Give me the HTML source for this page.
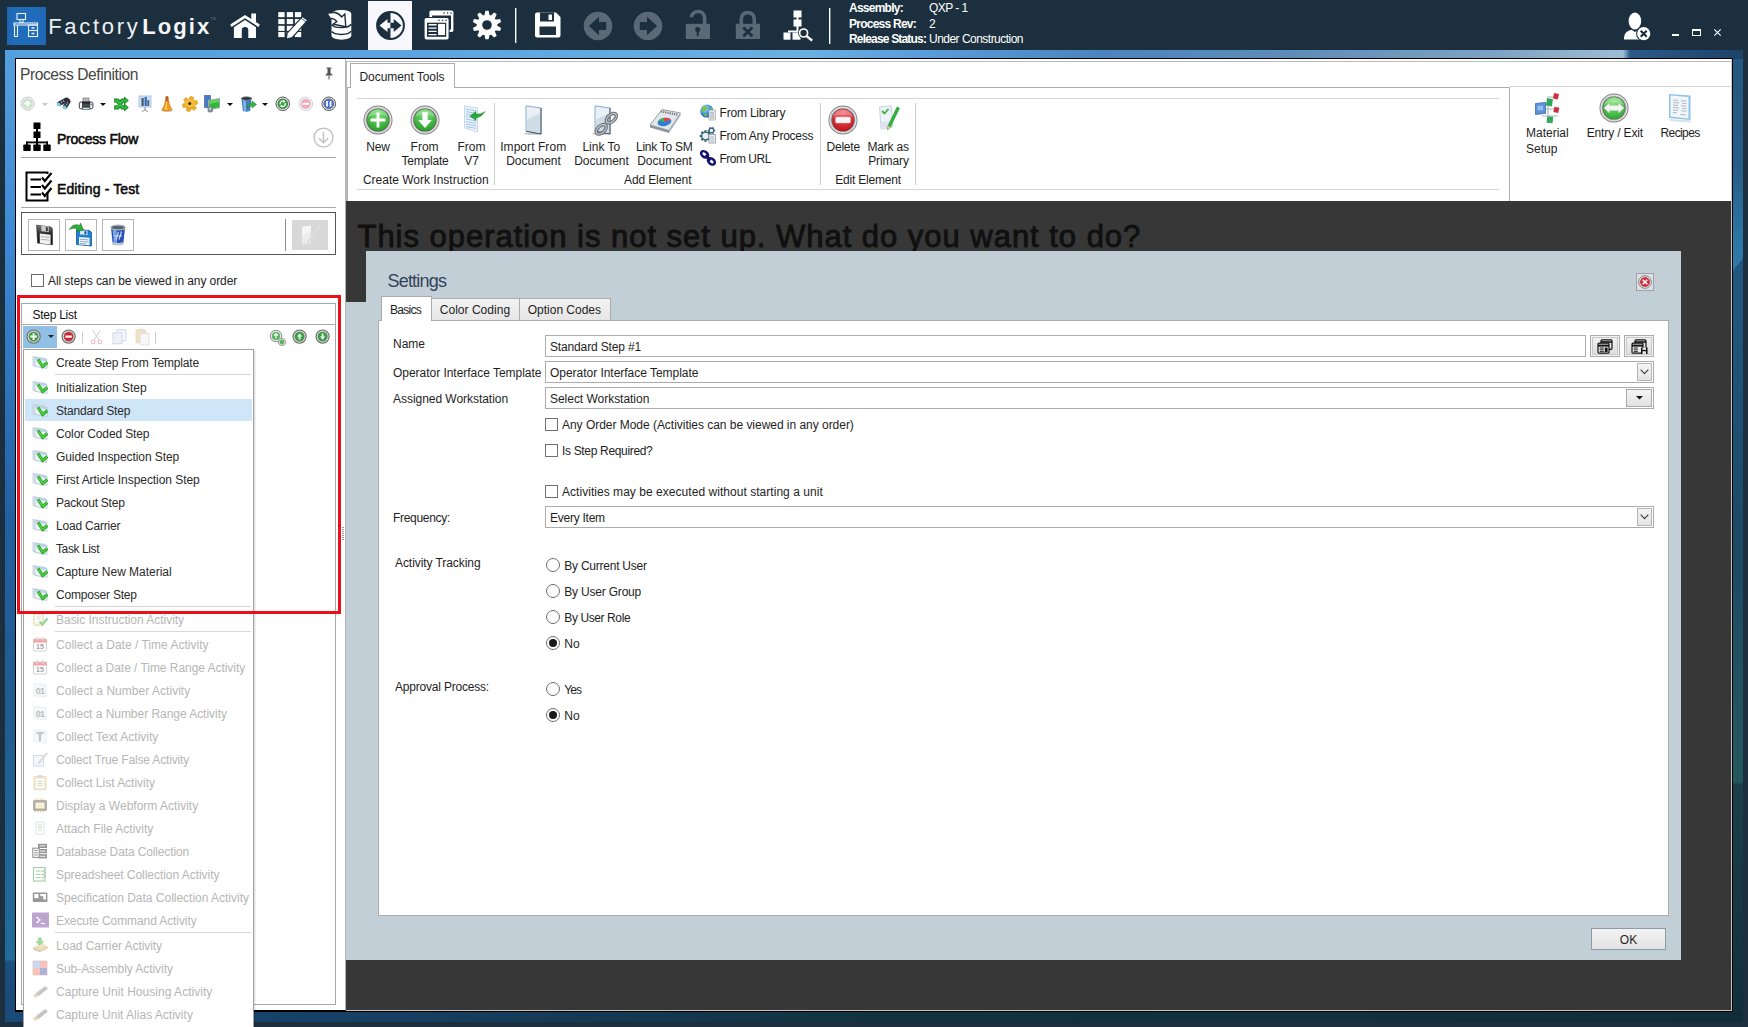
<!DOCTYPE html>
<html><head><meta charset="utf-8"><title>FactoryLogix</title>
<style>
*{box-sizing:border-box;margin:0;padding:0}
html,body{width:1748px;height:1027px;overflow:hidden}
body{position:relative;background:#1b2f3e;font-family:"Liberation Sans",sans-serif;font-size:12px;color:#222;line-height:1}
.a{position:absolute}
.t{position:absolute;white-space:nowrap;line-height:14px;height:14px}
svg{position:absolute;overflow:visible}
/* frame */
#frame{left:5px;top:50px;width:1738px;height:972px;background:#12303f}
#fl{left:5px;top:50px;width:11px;height:972px;background:linear-gradient(180deg,#54a0de 0%,#3d88d4 20%,#2360a2 48%,#205c8e 67%,#216a99 92%,#226c9b 93.5%,#1a4e7e 93.9%,#194a78 100%)}
#ft{left:5px;top:50px;width:1738px;height:9px;background:linear-gradient(90deg,#54a0de 0%,#5ba4df 23%,#6bb0e2 46%,#5c9fdc 52%,#4c84be 63%,#5f8db8 74.5%,#7fa3c2 86%,#9dbdd6 93.1%,#2c5a88 93.5%,#1d4268 100%)}
#fr{left:1732px;top:59px;width:11px;height:963px;background:linear-gradient(180deg,#205680 0%,#205680 25%,#1b4a66 50%,#24585e 75%,#1b3f48 75.4%,#122f3b 100%)}
#fr2{left:1732px;top:59px;width:11px;height:214px;background:linear-gradient(180deg,#245882 0%,#265c88 50%,#2c76a4 84%,#2e7aa8 100%);clip-path:polygon(0 0,100% 0,100% 199.5px,0 212.6px)}
#fb{left:5px;top:1011px;width:1738px;height:11px;background:linear-gradient(90deg,#194a78 0%,#163f62 22%,#12323f 50%,#112d3a 100%)}
#hdr{left:0;top:0;width:1748px;height:50px;background:#1b2f3e}
#lstrip{left:0;top:50px;width:5px;height:977px;background:#1b2f3e}
</style></head><body>
<div class="a" id="frame"></div>
<div class="a" id="ft"></div>
<div class="a" id="fl"></div>
<div class="a" id="fr"></div>
<div class="a" id="fr2"></div>
<div class="a" id="fb"></div>
<div class="a" id="hdr"></div>
<div class="a" id="lstrip"></div>

<!-- ===== HEADER ===== -->
<div class="a" style="left:7px;top:7px;width:39px;height:38px;background:linear-gradient(90deg,#1f66b2,#206cba 20%,#206cba 80%,#1f66b2)"></div>
<svg style="left:7px;top:7px" width="39" height="38" viewBox="0 0 39 38" fill="none" stroke="#e8f0fa" stroke-width="1.1">
<rect x="10" y="6.5" width="8.5" height="6"/><path d="M13 12.5v3h3v-3"/><rect x="7" y="16" width="23.5" height="2"/><path d="M7.5 18v11.5h3V18"/><rect x="21.5" y="18" width="9" height="11.5"/><path d="M21.5 23.5h9"/><path d="M24.5 21h3M24.5 26.5h3" stroke-width="1.4"/></svg>
<div class="t" style="left:48.2px;top:11px;height:32px;line-height:32px;font-size:22px;color:#eef1f4;letter-spacing:2.7px">Factory</div>
<div class="t" style="left:142.3px;top:11px;height:32px;line-height:32px;font-size:22px;color:#f4f6f8;letter-spacing:2.05px;font-weight:700">Logix</div>
<div class="t" style="left:210px;top:16px;font-size:4px;color:#62727f;line-height:6px;height:6px">TM</div>
<!-- home -->
<svg style="left:229px;top:12px" width="32" height="28" viewBox="229 12 32 28" fill="#fff"><path d="M245 15 L230.2 24.6 L231.6 26.9 L245 18.3 L258.4 26.9 L259.8 24.6 L256 22.1 V13.6 H251.3 V19.1 Z"/><path d="M233.9 27.2 L245 20 L256 27.2 V38 H248.3 V30 Q248.3 27 245 27 Q241.8 27 241.8 30 V38 H233.9 Z"/></svg>
<!-- grid edit -->
<svg style="left:278px;top:11px" width="30" height="28" viewBox="278 11 30 28" fill="#fff"><rect x="278.3" y="12.1" width="6.3" height="5.1"/><rect x="286.8" y="12.1" width="6.3" height="5.1"/><rect x="294.9" y="12.1" width="6.3" height="5.1"/><rect x="278.3" y="19.0" width="6.3" height="5.1"/><rect x="286.8" y="19.0" width="6.3" height="5.1"/><rect x="294.9" y="19.0" width="6.3" height="5.1"/><rect x="278.3" y="25.8" width="6.3" height="5.1"/><rect x="286.8" y="25.8" width="6.3" height="5.1"/><rect x="294.9" y="25.8" width="6.3" height="5.1"/><rect x="278.3" y="32.0" width="6.3" height="5.1"/><rect x="286.8" y="32.0" width="6.3" height="5.1"/><rect x="294.9" y="32.0" width="6.3" height="5.1"/><path d="M302.6 16.4 L307.8 20.2 L292.2 37.6 L286.2 39 L287.2 33.2 Z" stroke="#1b2f3e" stroke-width="1.2"/><path d="M301 18.2 L306.2 22" stroke="#1b2f3e" stroke-width="0.8"/></svg>
<!-- db -->
<svg style="left:326px;top:9px" width="28" height="32" viewBox="326 9 28 32" fill="#fff"><path d="M331.5 14 C331.5 8.8 351.3 8.8 351.3 14 V35.5 C351.3 41 331.5 41 331.5 35.5 Z"/><path d="M331.5 24.8 C335 28.6 348 28.6 351.3 24.3 M331.5 31.6 C335 35.4 348 35.4 351.3 31.1" stroke="#1b2f3e" stroke-width="1.5" fill="none"/><path d="M327 13.3 L334.5 12.2 C338 13 340 14.5 341.8 17 L344.8 14 L345.8 26.8 L333.2 24.2 L336.8 21.6 C335.5 19.6 333.5 18.2 330.2 18.4 Z" stroke="#1b2f3e" stroke-width="1.4"/></svg>
<!-- active tab -->
<div class="a" style="left:368px;top:1px;width:44px;height:49px;background:#f8f8fc"></div>
<svg style="left:374.5px;top:9.8px" width="31" height="31" viewBox="-15.5 -15.5 31 31"><path d="M0 -13.4 A13.4 13.4 0 0 0 -13.4 0 A13.4 13.4 0 0 0 0 13.4 Z" fill="#1b2f3e"/><circle r="13.4" fill="none" stroke="#1b2f3e" stroke-width="2"/><path d="M-11 0 L-3 -6.4 V-2.8 H0 V2.8 H-3 V6.4 Z" fill="#f8f8fc"/><path d="M11 0 L3.2 -6.4 V-2.8 H0 V2.8 H3.2 V6.4 Z" fill="#1b2f3e"/></svg>
<!-- windows -->
<svg style="left:423px;top:9px" width="32" height="32" viewBox="423 9 32 32"><rect x="429.4" y="10.4" width="24" height="21.6" rx="1.8" fill="#fff"/><rect x="432.1" y="15.5" width="18.9" height="14.1" fill="#1b2f3e"/><circle cx="444.1" cy="13" r="0.8" fill="#1b2f3e"/><circle cx="447.6" cy="13" r="0.8" fill="#1b2f3e"/><circle cx="451" cy="13" r="0.8" fill="#1b2f3e"/><rect x="423.6" y="16.9" width="26" height="23.6" rx="2.4" fill="#1b2f3e"/><rect x="424.6" y="17.9" width="24" height="21.6" rx="1.8" fill="#fff"/><rect x="427" y="22.7" width="19.2" height="14.1" fill="#1b2f3e"/><circle cx="439" cy="20.3" r="0.8" fill="#1b2f3e"/><circle cx="442.6" cy="20.3" r="0.8" fill="#1b2f3e"/><circle cx="446" cy="20.3" r="0.8" fill="#1b2f3e"/><path d="M428.5 24.8h8.1M428.5 28.1h8.1M428.5 31.4h8.1M428.5 34.6h8.1" stroke="#fff" stroke-width="1.4"/><rect x="438.1" y="23.9" width="6.9" height="11.2" fill="#fff"/></svg>
<!-- gear -->
<svg style="left:472px;top:10px" width="30" height="30" viewBox="-15 -15 30 30" fill="#fff"><path d="M-2.7 -9 L-1.6 -14.3 H1.6 L2.7 -9 Z" transform="rotate(0)"/><path d="M-2.7 -9 L-1.6 -14.3 H1.6 L2.7 -9 Z" transform="rotate(36)"/><path d="M-2.7 -9 L-1.6 -14.3 H1.6 L2.7 -9 Z" transform="rotate(72)"/><path d="M-2.7 -9 L-1.6 -14.3 H1.6 L2.7 -9 Z" transform="rotate(108)"/><path d="M-2.7 -9 L-1.6 -14.3 H1.6 L2.7 -9 Z" transform="rotate(144)"/><path d="M-2.7 -9 L-1.6 -14.3 H1.6 L2.7 -9 Z" transform="rotate(180)"/><path d="M-2.7 -9 L-1.6 -14.3 H1.6 L2.7 -9 Z" transform="rotate(216)"/><path d="M-2.7 -9 L-1.6 -14.3 H1.6 L2.7 -9 Z" transform="rotate(252)"/><path d="M-2.7 -9 L-1.6 -14.3 H1.6 L2.7 -9 Z" transform="rotate(288)"/><path d="M-2.7 -9 L-1.6 -14.3 H1.6 L2.7 -9 Z" transform="rotate(324)"/><circle r="10.3"/><circle r="4.8" fill="#1b2f3e"/></svg>
<div class="a" style="left:515px;top:8px;width:1px;height:35px;background:#fff"></div><div class="a" style="left:516px;top:8px;width:1px;height:35px;background:#6f7d88"></div>
<!-- save -->
<svg style="left:535px;top:12px" width="26" height="26" viewBox="0 0 26 26" fill="#fff"><path d="M2 0.5 H21 L25.5 5 V23.5 Q25.5 25.5 23.5 25.5 H2 Q0 25.5 0 23.5 V2.5 Q0 0.5 2 0.5 Z"/><rect x="5" y="0.5" width="14" height="9" fill="#1b2f3e"/><rect x="13.5" y="2.5" width="3.5" height="5.5" fill="#fff"/><rect x="4.5" y="14.5" width="16.5" height="8.5" fill="#1b2f3e"/></svg>
<!-- back / fwd -->
<svg style="left:583px;top:11px" width="30" height="30" viewBox="0 0 30 30"><circle cx="15" cy="15" r="14.3" fill="#596a76"/><path d="M5.9 15 L16 5.8 V10.9 H23.2 V19.1 H16 V24.2 Z" fill="#1b2f3e"/></svg>
<svg style="left:633px;top:11px" width="30" height="30" viewBox="0 0 30 30"><circle cx="15" cy="15" r="14.3" fill="#596a76"/><path d="M24.1 15 L14 5.8 V10.9 H6.8 V19.1 H14 V24.2 Z" fill="#1b2f3e"/></svg>
<!-- unlock -->
<svg style="left:685px;top:10px" width="26" height="30" viewBox="0 0 26 30"><path d="M6.3 7.2 C7.5 -0.5 19.6 -0.5 19.6 8 V15" fill="none" stroke="#596a76" stroke-width="3.6"/><rect x="0.8" y="13.8" width="24.2" height="15.2" fill="#596a76"/><circle cx="12.7" cy="19.6" r="2.5" fill="#1b2f3e"/><rect x="11.7" y="20" width="2" height="6" fill="#1b2f3e"/></svg>
<!-- lock x -->
<svg style="left:735px;top:10px" width="26" height="30" viewBox="0 0 26 30"><path d="M6.3 15 V9 C6.3 0.5 19.3 0.5 19.3 9 V15" fill="none" stroke="#596a76" stroke-width="3.6"/><rect x="0.8" y="13.8" width="24.2" height="15.2" fill="#596a76"/><path d="M8.3 17.6 L17.3 26.2 M17.3 17.6 L8.3 26.2" stroke="#1b2f3e" stroke-width="2.8"/></svg>
<!-- flow search -->
<svg style="left:783px;top:10px" width="31" height="31" viewBox="0 0 31 31" fill="#fff"><rect x="10.5" y="0.5" width="8" height="7"/><rect x="13.5" y="7" width="2" height="3"/><rect x="10.5" y="9.5" width="8" height="7"/><rect x="13.5" y="16" width="2" height="6"/><rect x="5" y="20.5" width="12" height="1.8"/><rect x="0.5" y="22.5" width="7" height="7.2"/><rect x="9.5" y="22.5" width="8" height="7.2"/><circle cx="20.6" cy="23" r="5.6" fill="#1b2f3e"/><circle cx="20.6" cy="23" r="4" fill="#1b2f3e" stroke="#fff" stroke-width="1.7"/><path d="M23.8 26.2 L29.2 30.6" stroke="#fff" stroke-width="2.4"/></svg>
<div class="a" style="left:829px;top:8px;width:1px;height:36px;background:#fff"></div><div class="a" style="left:830px;top:8px;width:1px;height:36px;background:#6f7d88"></div>
<div class="t" style="left:849px;top:1px;color:#fff;font-weight:700;letter-spacing:-0.75px">Assembly:</div>
<div class="t" style="left:929px;top:1px;color:#fff;letter-spacing:-0.55px">QXP - 1</div>
<div class="t" style="left:849px;top:17px;color:#fff;font-weight:700;letter-spacing:-0.75px">Process Rev:</div>
<div class="t" style="left:929px;top:17px;color:#fff;letter-spacing:-0.55px">2</div>
<div class="t" style="left:849px;top:32px;color:#fff;font-weight:700;letter-spacing:-0.82px">Release Status:</div>
<div class="t" style="left:929px;top:32px;color:#fff;letter-spacing:-0.52px">Under Construction</div>
<!-- user -->
<svg style="left:1622px;top:10px" width="32" height="32" viewBox="1622 10 32 32"><ellipse cx="1634.9" cy="21" rx="6.3" ry="8.6" fill="#fff"/><path d="M1624 39.6 C1624 33 1626.5 31.2 1631.5 29.8 L1634.9 32 L1638.3 29.8 C1641 30.6 1643 31.5 1644 33 V39.6 Z" fill="#fff"/><circle cx="1643.7" cy="33.7" r="7.6" fill="#1b2f3e"/><circle cx="1643.7" cy="33.7" r="6.6" fill="#fff"/><path d="M1640.7 30.7 L1646.7 36.7 M1646.7 30.7 L1640.7 36.7" stroke="#1b2f3e" stroke-width="2.1"/></svg>
<div class="a" style="left:1672px;top:34px;width:7px;height:2px;background:#fff"></div>
<div class="a" style="left:1692px;top:29px;width:9px;height:7px;border:1px solid #fff;border-top-width:2px"></div>
<svg style="left:1714px;top:29px" width="7" height="7" viewBox="0 0 7 7"><path d="M0.3 0.3 L6.7 6.7 M6.7 0.3 L0.3 6.7" stroke="#fff" stroke-width="1.1"/></svg>
<!--HEADER-->
<!--LEFT_START-->
<!-- ===== LEFT PANEL ===== -->
<div class="a" style="left:15px;top:58px;width:1718px;height:954px;background:#000"></div>
<div class="a" style="left:16px;top:59px;width:330px;height:951px;background:#fff;border-right:1px solid #b4b4b4"></div>
<div class="t" style="left:20px;top:64.6px;height:20px;line-height:20px;font-size:15.6px;color:#454545;letter-spacing:-0.43px">Process Definition</div>
<svg style="left:324px;top:67px" width="10" height="13" viewBox="0 0 10 13"><path d="M2.5 0.5h5v1h-1v4.5l1.8 1.6v0.9H1.7v-0.9L3.5 6V1.5h-1z" fill="#555"/><path d="M5 8.5V12.5" stroke="#555" stroke-width="1"/></svg>
<svg style="left:20.4px;top:96.4px;opacity:1" width="15.2" height="15.2" viewBox="-7.6 -7.6 15.2 15.2"><circle r="6.6" fill="#f2f2f2" stroke="#c9c9c9" stroke-width="1"/><circle r="4.699999999999999" fill="#bfe8c0" stroke="#c9c9c9" stroke-width="0.6"/><path d="M-3.2 0H3.2M0 -3.2V3.2" stroke="#fff" stroke-width="2"/></svg>
<svg style="left:42px;top:102.5px" width="6" height="3" viewBox="0 0 6 3"><path d="M0 0H6L3 3Z" fill="#c4c4c4"/></svg>
<svg style="left:55px;top:96px" width="16" height="16" viewBox="55 96 16 16"><g stroke="#2d3238" stroke-width="4.6" stroke-linecap="round"><path d="M59.2 103.8 L66.5 99.8"/><path d="M65 106.8 L68.2 101.6"/></g><path d="M66 99.2 C68.5 98.6 70 100.5 69 102.8" fill="none" stroke="#2d3238" stroke-width="2"/><g stroke="#c9d3db" stroke-width="0.9"><path d="M61 101.4 L62 103.2M63.2 100.2 L64.2 102M65.6 104 L67.2 105M66.6 102.2 L68.2 103.2"/></g><ellipse cx="58.7" cy="104.4" rx="1.6" ry="2.2" fill="#7fd0f6" transform="rotate(-55 58.7 104.4)"/><ellipse cx="64.7" cy="107.4" rx="1.6" ry="2.2" fill="#7fd0f6" transform="rotate(-55 64.7 107.4)"/></svg>
<svg style="left:78px;top:96px" width="16" height="16" viewBox="78 96 16 16"><rect x="79.3" y="102" width="13.6" height="6.8" rx="1.6" fill="#f4f4f6" stroke="#2a2a2a" stroke-width="0.9"/><rect x="83" y="98" width="6" height="4.5" fill="#b9b9b9" stroke="#666" stroke-width="0.6"/><rect x="82" y="101.6" width="8.2" height="6.6" rx="1" fill="#45484d"/><rect x="82" y="101.6" width="8.2" height="2.2" fill="#2a2c30"/><rect x="82.6" y="107.4" width="7" height="2.2" fill="#c8f0fa" stroke="#444" stroke-width="0.6"/><rect x="90.6" y="103.8" width="1.1" height="1.4" fill="#2a5bf0"/></svg>
<svg style="left:100px;top:102.5px" width="6" height="3" viewBox="0 0 6 3"><path d="M0 0H6L3 3Z" fill="#111"/></svg>
<svg style="left:113px;top:96px" width="16" height="16" viewBox="0 0 16 16" fill="none" stroke-linejoin="round"><path d="M1 4.5h3.5l5 7h3M1 11.5h3.5l5-7h3" stroke="#157a1c" stroke-width="4.2"/><path d="M11.5 1.2L15.3 4.5L11.5 7.8ZM11.5 8.2L15.3 11.5L11.5 14.8Z" fill="#2fb53a" stroke="#157a1c" stroke-width="0.9"/><path d="M1 4.5h3.5l5 7h3M1 11.5h3.5l5-7h3" stroke="#35c042" stroke-width="2.2"/></svg>
<svg style="left:137px;top:95px" width="16" height="18" viewBox="0 0 16 18"><rect x="2" y="1" width="12" height="11" fill="#cfe3f7" stroke="#9bbbe0" stroke-width="0.8"/><rect x="4.5" y="3" width="2.2" height="8" fill="#4a5564"/><rect x="7.6" y="2" width="2.2" height="9" fill="#2f62b5"/><rect x="10.4" y="5" width="1.8" height="6" fill="#55606e"/><path d="M8 12v3.5M8 14.5l-3 2.5M8 14.5l3 2.5" stroke="#8a8f96" stroke-width="1"/></svg>
<svg style="left:159px;top:95px" width="16" height="18" viewBox="0 0 16 18"><ellipse cx="8" cy="15.5" rx="6" ry="1.6" fill="#d8d2c8"/><rect x="6.4" y="1" width="3.2" height="6" rx="1.5" fill="#b5651d"/><path d="M6.2 6 C6 10 4.5 12 3 14.5 C3 16.3 13 16.3 13 14.5 C11.5 12 10 10 9.8 6 Z" fill="#f59a16"/><path d="M7 7 C7 10 6 12 5 14 C6 14.8 8 15 8.5 15 C8 12 8 9 8.2 7Z" fill="#ffd264" opacity="0.8"/><path d="M6.2 6 C6 10 4.5 12 3 14.5 C3 16.3 13 16.3 13 14.5 C11.5 12 10 10 9.8 6 Z" fill="none" stroke="#c46a0a" stroke-width="0.6"/></svg>
<svg style="left:181px;top:95px" width="18" height="18" viewBox="-10.2 -10.2 20.4 20.4"><g fill="#f0b429" stroke="#c98c12" stroke-width="0.5"><rect x="-2.2" y="-8.6" width="4.4" height="5" rx="1" transform="rotate(15)"/><rect x="-2.2" y="-8.6" width="4.4" height="5" rx="1" transform="rotate(75)"/><rect x="-2.2" y="-8.6" width="4.4" height="5" rx="1" transform="rotate(135)"/><rect x="-2.2" y="-8.6" width="4.4" height="5" rx="1" transform="rotate(195)"/><rect x="-2.2" y="-8.6" width="4.4" height="5" rx="1" transform="rotate(255)"/><rect x="-2.2" y="-8.6" width="4.4" height="5" rx="1" transform="rotate(315)"/><circle r="6"/></g><circle r="6" fill="#f3bc3a"/><circle cx="-0.3" cy="-0.5" r="1.7" fill="#3b2a08"/><path d="M-4 3 A5 5 0 0 0 4 3" stroke="#d79a18" stroke-width="1.2" fill="none"/></svg>
<svg style="left:204px;top:95px" width="18" height="18" viewBox="0 0 18 18"><rect x="0.5" y="0.5" width="6" height="12" fill="#4a78c8" stroke="#2f569c" stroke-width="0.6"/><path d="M4 5 L16 3 V13 L4 15.5Z" fill="#9aa2aa"/><path d="M5.5 5.8 L15 4.2 V12 L5.5 14Z" fill="#2dbb35"/><path d="M5.5 5.8 L15 4.2 V7 L5.5 9Z" fill="#6fe070" opacity="0.7"/><rect x="4" y="12" width="4.5" height="5" rx="1" fill="#8d99a5" stroke="#5c6873" stroke-width="0.6"/><circle cx="6.2" cy="13.6" r="1" fill="#dfe6ec"/></svg>
<svg style="left:227px;top:102.5px" width="6" height="3" viewBox="0 0 6 3"><path d="M0 0H6L3 3Z" fill="#111"/></svg>
<svg style="left:239px;top:95px" width="18" height="18" viewBox="0 0 18 18"><path d="M2.5 3.5 L3.8 15.5 C4 17 11 17 11.2 15.5 L12.5 3.5Z" fill="#3f7fc4"/><path d="M4 4.5 L4.8 15 C5.5 16 6.5 16 7 16 L6.6 4.5Z" fill="#9cc8ee" opacity="0.8"/><ellipse cx="7.5" cy="3.5" rx="5.2" ry="1.8" fill="#2b3440" stroke="#8b949e" stroke-width="0.8"/><path d="M7.5 13 C9 10 11 8.5 13 8.2 V6 L17.5 9.5 L13 13 V10.8 C11 11 9 11.8 7.5 13Z" fill="#35b53f" stroke="#1d7f27" stroke-width="0.5"/></svg>
<svg style="left:262px;top:102.5px" width="6" height="3" viewBox="0 0 6 3"><path d="M0 0H6L3 3Z" fill="#111"/></svg>
<svg style="left:275.2px;top:96.2px;opacity:1" width="15.6" height="15.6" viewBox="-7.8 -7.8 15.6 15.6"><circle r="6.8" fill="#e4e4e4" stroke="#4a4a4a" stroke-width="0.9"/><circle r="4.9" fill="#2fa83a" stroke="#4a4a4a" stroke-width="0.6"/><path d="M-2.6 0.6 A2.7 2.7 0 0 1 1 -2.5 M2.6 -0.6 A2.7 2.7 0 0 1 -1 2.5" stroke="#fff" stroke-width="1.3" fill="none"/><path d="M0.6 -4 L3 -2.3 L0.6 -0.9Z M-0.6 4 L-3 2.3 L-0.6 0.9Z" fill="#fff"/></svg>
<svg style="left:298.2px;top:96.2px;opacity:1" width="15.6" height="15.6" viewBox="-7.8 -7.8 15.6 15.6"><circle r="6.8" fill="#f4f4f4" stroke="#d4d4d4" stroke-width="1"/><circle r="4.9" fill="#f4a9b8" stroke="#d4d4d4" stroke-width="0.6"/><rect x="-3.2" y="-1" width="6.4" height="2" fill="#fff"/></svg>
<svg style="left:320.7px;top:96.2px;opacity:1" width="15.6" height="15.6" viewBox="-7.8 -7.8 15.6 15.6"><circle r="6.8" fill="#e4e4e4" stroke="#4a4a4a" stroke-width="0.9"/><circle r="4.9" fill="#4a6fd8" stroke="#4a4a4a" stroke-width="0.6"/><rect x="-2.7" y="-2.8" width="1.8" height="5.6" fill="#fff"/><rect x="0.9" y="-2.8" width="1.8" height="5.6" fill="#fff"/></svg>
<svg style="left:23px;top:122px" width="28" height="30" viewBox="0 0 28 30" fill="#000"><rect x="10.5" y="0.5" width="7" height="6.5"/><rect x="13" y="7" width="2" height="3"/><rect x="10.5" y="9.5" width="7" height="6.5"/><rect x="13" y="16" width="2" height="4"/><rect x="3" y="19.5" width="22" height="1.8"/><rect x="3" y="19.5" width="1.8" height="3.5"/><rect x="23.2" y="19.5" width="1.8" height="3.5"/><rect x="13" y="19.5" width="2" height="3.5"/><rect x="0.3" y="22.5" width="7.4" height="6.5" rx="0.8"/><rect x="10.3" y="22.5" width="7.4" height="6.5" rx="0.8"/><rect x="20.3" y="22.5" width="7.4" height="6.5" rx="0.8"/></svg>
<div class="t" style="left:57px;top:128.8px;height:20px;line-height:20px;font-size:14px;font-weight:400;color:#0c0c0c;letter-spacing:-0.25px;-webkit-text-stroke:0.55px #0c0c0c">Process Flow</div>
<svg style="left:313px;top:127px" width="21" height="21" viewBox="-10.5 -10.5 21 21" fill="none" stroke="#c2c2c2" stroke-width="1.4"><circle r="9.4"/><path d="M0 -5.5V5M-4.5 0.8L0 5.3L4.5 0.8"/></svg>
<div class="a" style="left:21px;top:157px;width:315px;height:1px;background:#a8a8a8"></div>
<svg style="left:25px;top:171px" width="28" height="31" viewBox="0 0 28 31" fill="none" stroke="#000"><path d="M22.5 21 V29.5 H1.5 V1.5 H22.5 V3" stroke-width="2"/><path d="M5.5 8.5h10.5M5.5 16h10.5M5.5 23.5h10.5" stroke-width="1.9"/><path d="M17 6.5 L19.8 10 L26.5 2 M17 14 L19.8 17.5 L26.5 9.5 M17 21.5 L19.8 25 L26.5 17" stroke-width="2.1"/></svg>
<div class="t" style="left:57px;top:179px;height:20px;line-height:20px;font-size:14px;font-weight:400;color:#0c0c0c;letter-spacing:0.12px;-webkit-text-stroke:0.55px #0c0c0c">Editing - Test</div>
<div class="a" style="left:21px;top:207px;width:315px;height:1px;background:#a8a8a8"></div>
<div class="a" style="left:21px;top:212px;width:315px;height:43px;border:1px solid #555;background:#fff"></div>
<div class="a" style="left:28px;top:219px;width:32px;height:32px;border:1px solid #b6b6b6;background:#fff"></div>
<div class="a" style="left:65px;top:219px;width:32px;height:32px;border:1px solid #b6b6b6;background:#fff"></div>
<div class="a" style="left:102px;top:219px;width:32px;height:32px;border:1px solid #b6b6b6;background:#fff"></div>
<svg style="left:34.5px;top:223.5px" width="19" height="22" viewBox="0 0 18 19" preserveAspectRatio="none"><defs><linearGradient id="fg" x1="0" y1="0" x2="0" y2="1"><stop offset="0" stop-color="#7a7a7a"/><stop offset="0.45" stop-color="#2a2a2a"/><stop offset="1" stop-color="#050505"/></linearGradient></defs><path d="M1.5 1 L15 2.5 L16.5 4 V18 L2.5 16.5Z" fill="url(#fg)" stroke="#111" stroke-width="0.5"/><path d="M4.5 8.2 L14.8 9.2 V17.6 L4.5 16.6Z" fill="#f1f1f1"/><path d="M5.5 10.8l8.3 0.8M5.5 13.2l8.3 0.8" stroke="#aaa" stroke-width="0.8"/><path d="M6 1.6 L13 2.4 V7 L6 6.3Z" fill="#c9ccd0"/><rect x="10.3" y="2.8" width="1.8" height="3.3" fill="#333"/></svg>
<svg style="left:68px;top:221px" width="26" height="26" viewBox="0 0 26 26"><path d="M8.5 8.5 L21.5 9.5 L23.5 11.5 V25 L8.5 23.5Z" fill="#1f7fd0" stroke="#0f5aa0" stroke-width="0.8"/><path d="M11 16 L21.5 16.8 V24.3 L11 23.4Z" fill="#eef6fc"/><path d="M12 18.2l8.5 0.7M12 20.4l8.5 0.7M12 22.4l6 0.5" stroke="#6a8aa8" stroke-width="0.7"/><path d="M12 9.2 L19.5 9.8 V14 L12 13.4Z" fill="#cfe6f8"/><rect x="16.5" y="10.3" width="1.8" height="3" fill="#245"/><path d="M1.5 8.5 C4 4 8 3 11.5 4.5 L12.5 2 L15.5 9 L8.5 10.5 L9.8 7.8 C7 6.8 4 7 1.5 8.5Z" fill="#2fae3a" stroke="#1a7a22" stroke-width="0.6"/></svg>
<svg style="left:109px;top:224px" width="18" height="22" viewBox="0 0 18 22"><ellipse cx="9" cy="20" rx="6" ry="1.5" fill="#c8c8c8"/><path d="M2 3.5 L3.6 19 C4 21 14 21 14.4 19 L16 3.5Z" fill="#2a50b8"/><path d="M3.5 5 L4.8 18.5 C5.5 19.5 7 19.8 8 19.8 L7.5 5Z" fill="#8ec0f0" opacity="0.75"/><path d="M9.5 8 L7 16 M12.5 7.5 L10 15.5" stroke="#cfe2f8" stroke-width="1.1"/><path d="M5 12h8" stroke="#d8e8fa" stroke-width="0.9"/><ellipse cx="9" cy="3.5" rx="7" ry="2.3" fill="#59636e" stroke="#aab2ba" stroke-width="1.3"/><path d="M3.8 17.5 C5 19.5 13 19.5 14.2 17.5 L14 19.6 C13 21.4 5 21.4 4 19.6Z" fill="#c5ccd2"/></svg>
<div class="a" style="left:285px;top:219px;width:1px;height:32px;background:#8c8c8c"></div>
<div class="a" style="left:292px;top:220px;width:36px;height:30px;background:#d8d8d8"></div>
<svg style="left:300px;top:223px" width="22" height="24" viewBox="0 0 22 24"><path d="M2 4 L11 2.5 V20 L2 21.5Z" fill="#ececec"/><path d="M2 4 L11 2.5 V8 L2 12Z" fill="#f6f6f6"/><path d="M19.5 1.5 L8 17.5 L7 20 L9.3 18.5 L21 2.5Z" fill="#e6e6e6" stroke="#cfcfcf" stroke-width="0.5"/></svg>
<div class="a" style="left:31px;top:274px;width:13px;height:13px;border:1px solid #6a6a6a;background:#fff"></div>
<div class="t" style="left:48px;top:274px;letter-spacing:-0.08px;color:#222">All steps can be viewed in any order</div>
<div class="a" style="left:21px;top:303px;width:315px;height:702px;border:1px solid #a9a9a9;background:#fff"></div>
<div class="t" style="left:32.5px;top:307.5px;color:#111;letter-spacing:-0.27px">Step List</div>
<div class="a" style="left:22px;top:324px;width:313px;height:1px;background:#a9a9a9"></div>
<div class="a" style="left:23px;top:326px;width:34px;height:22px;background:#90c0e6"></div>
<svg style="left:26.4px;top:329.4px;opacity:1" width="15.2" height="15.2" viewBox="-7.6 -7.6 15.2 15.2"><circle r="6.6" fill="#e4e4e4" stroke="#6a6a6a" stroke-width="1.1"/><circle r="4.699999999999999" fill="#2fa83a" stroke="#6a6a6a" stroke-width="0.6"/><path d="M-3.3 0H3.3M0 -3.3V3.3" stroke="#fff" stroke-width="2"/></svg>
<svg style="left:48px;top:334.5px" width="6" height="3" viewBox="0 0 6 3"><path d="M0 0H6L3 3Z" fill="#222"/></svg>
<svg style="left:61.4px;top:329.4px;opacity:1" width="15.2" height="15.2" viewBox="-7.6 -7.6 15.2 15.2"><circle r="6.6" fill="#e4e4e4" stroke="#6a6a6a" stroke-width="1.1"/><circle r="4.699999999999999" fill="#d8232f" stroke="#6a6a6a" stroke-width="0.6"/><rect x="-3.2" y="-1.1" width="6.4" height="2.2" fill="#fff"/></svg>
<div class="a" style="left:82px;top:332px;width:1px;height:12px;background:#cfcfcf"></div>
<svg style="left:90px;top:329px" width="13" height="16" viewBox="0 0 13 16" fill="none"><path d="M2.5 1 L9 11 M10.5 1 L4 11" stroke="#d9d9d9" stroke-width="1.1"/><circle cx="3.2" cy="12.8" r="1.8" stroke="#f3b9b9" stroke-width="1.1"/><circle cx="9.8" cy="12.8" r="1.8" stroke="#f3b9b9" stroke-width="1.1"/></svg>
<svg style="left:112px;top:329px" width="15" height="16" viewBox="0 0 15 16"><rect x="5" y="0.8" width="9" height="11" fill="#f4f7fb" stroke="#c9d4e4" stroke-width="0.9"/><rect x="1" y="3.8" width="9" height="11" fill="#eef2f8" stroke="#c9d4e4" stroke-width="0.9"/></svg>
<svg style="left:135px;top:328px" width="15" height="18" viewBox="0 0 15 18"><rect x="1" y="2" width="10" height="13" rx="1" fill="#f3e3c6" stroke="#e8d4ae" stroke-width="0.8"/><rect x="3.5" y="0.8" width="5" height="2.6" rx="0.8" fill="#e3dccf"/><rect x="5" y="5.5" width="9" height="11.5" fill="#f7f7f7" stroke="#dcdcdc" stroke-width="0.8"/></svg>
<div class="a" style="left:155px;top:332px;width:1px;height:12px;background:#cfcfcf"></div>
<svg style="left:269px;top:329px;opacity:0.85" width="18" height="18" viewBox="0 0 18 18"><circle cx="7" cy="7" r="5.8" fill="#dcdcdc" stroke="#777" stroke-width="0.9"/><circle cx="7" cy="7" r="4" fill="#38a840"/><path d="M7 9.6V5M5 6.6L7 4.6L9 6.6" stroke="#fff" stroke-width="1.2" fill="none"/><circle cx="13" cy="13" r="3.6" fill="#dcdcdc" stroke="#777" stroke-width="0.8"/><circle cx="13" cy="13" r="2.3" fill="#38a840"/></svg>
<svg style="left:292.4px;top:329.4px;opacity:1" width="15.2" height="15.2" viewBox="-7.6 -7.6 15.2 15.2"><circle r="6.6" fill="#e4e4e4" stroke="#6a6a6a" stroke-width="1.1"/><circle r="4.699999999999999" fill="#2fa83a" stroke="#6a6a6a" stroke-width="0.6"/><path d="M-0.9 3V0H-2.6L0 -3.1L2.6 0H0.9V3Z" fill="#fff"/></svg>
<svg style="left:314.9px;top:329.4px;opacity:1" width="15.2" height="15.2" viewBox="-7.6 -7.6 15.2 15.2"><circle r="6.6" fill="#e4e4e4" stroke="#6a6a6a" stroke-width="1.1"/><circle r="4.699999999999999" fill="#2fa83a" stroke="#6a6a6a" stroke-width="0.6"/><path d="M-0.9 -3V0H-2.6L0 3.1L2.6 0H0.9V-3Z" fill="#fff"/></svg>
<!--LEFT_END-->
<!--MAIN_START-->
<!-- ===== MAIN / RIBBON ===== -->
<div class="a" style="left:346px;top:59px;width:1386px;height:142px;background:#fff"></div>
<div class="a" style="left:346px;top:61px;width:1386px;height:140px;border:1px solid #b9b9b9;border-bottom:none;background:#fff"></div>
<div class="a" style="left:347px;top:87px;width:1163px;height:114px;border:1px solid #acacac;border-bottom:none;background:#fff"></div>
<div class="a" style="left:1510px;top:86px;width:1221px;height:115px;border-top:1px solid #d5d5d5;background:#fff;width:221px"></div>
<div class="a" style="left:350px;top:63px;width:105px;height:25px;border:1px solid #acacac;border-bottom:none;background:#fff"></div>
<div class="t" style="left:359.5px;top:69.7px;color:#1e1e1e;letter-spacing:-0.06px;">Document Tools</div>
<div class="a" style="left:357px;top:98px;width:1142px;height:1px;background:#d4d4d4"></div>
<div class="a" style="left:357px;top:189px;width:1142px;height:1px;background:#d4d4d4"></div>
<div class="a" style="left:494px;top:103px;width:1px;height:82px;background:#cfcfcf"></div>
<div class="a" style="left:820px;top:103px;width:1px;height:82px;background:#cfcfcf"></div>
<div class="a" style="left:915px;top:103px;width:1px;height:82px;background:#cfcfcf"></div>
<svg style="left:361.5px;top:103.5px" width="32" height="32" viewBox="-16 -16 32 32"><defs><radialGradient id="g377" cx="0.5" cy="0.25" r="0.8"><stop offset="0" stop-color="#7fe07a"/><stop offset="1" stop-color="#1f9a22"/></radialGradient></defs><circle r="14.5" fill="#7e7e7e"/><circle r="13.6" fill="#e8e8e8"/><circle r="12.6" fill="#c9c9c9"/><circle r="11.6" fill="#5d5d5d"/><circle r="10.9" fill="url(#g377)"/><path d="M-10 -3 A10.5 10.5 0 0 1 10 -3 A14 9 0 0 0 -10 -3Z" fill="#fff" opacity="0.28"/><path d="M-7.5 0H7.5M0 -7.5V7.5" stroke="#fff" stroke-width="2.8"/></svg>
<svg style="left:408.5px;top:103.5px" width="32" height="32" viewBox="-16 -16 32 32"><defs><radialGradient id="g424" cx="0.5" cy="0.25" r="0.8"><stop offset="0" stop-color="#7fe07a"/><stop offset="1" stop-color="#1f9a22"/></radialGradient></defs><circle r="14.5" fill="#7e7e7e"/><circle r="13.6" fill="#e8e8e8"/><circle r="12.6" fill="#c9c9c9"/><circle r="11.6" fill="#5d5d5d"/><circle r="10.9" fill="url(#g424)"/><path d="M-10 -3 A10.5 10.5 0 0 1 10 -3 A14 9 0 0 0 -10 -3Z" fill="#fff" opacity="0.28"/><path d="M-2.6 -8 H2.6 V0 H6.8 L0 8 L-6.8 0 H-2.6Z" fill="#fff"/></svg>
<svg style="left:826.5px;top:103.5px" width="32" height="32" viewBox="-16 -16 32 32"><defs><radialGradient id="g842" cx="0.5" cy="0.25" r="0.8"><stop offset="0" stop-color="#f26a72"/><stop offset="1" stop-color="#c40812"/></radialGradient></defs><circle r="14.5" fill="#7e7e7e"/><circle r="13.6" fill="#e8e8e8"/><circle r="12.6" fill="#c9c9c9"/><circle r="11.6" fill="#5d5d5d"/><circle r="10.9" fill="url(#g842)"/><path d="M-10 -3 A10.5 10.5 0 0 1 10 -3 A14 9 0 0 0 -10 -3Z" fill="#fff" opacity="0.28"/><rect x="-7.5" y="-3" width="15" height="6" rx="1" fill="#f4f4f4" stroke="#b9b9b9" stroke-width="0.6"/></svg>
<svg style="left:1598px;top:91.5px" width="32" height="32" viewBox="-16 -16 32 32"><defs><radialGradient id="g1614" cx="0.5" cy="0.25" r="0.8"><stop offset="0" stop-color="#8ae47f"/><stop offset="1" stop-color="#2aa82c"/></radialGradient></defs><circle r="14.5" fill="#7e7e7e"/><circle r="13.6" fill="#e8e8e8"/><circle r="12.6" fill="#c9c9c9"/><circle r="11.6" fill="#5d5d5d"/><circle r="10.9" fill="url(#g1614)"/><path d="M-10 -3 A10.5 10.5 0 0 1 10 -3 A14 9 0 0 0 -10 -3Z" fill="#fff" opacity="0.28"/><path d="M-10 0 L-4.5 -5 V-2.4 H4.5 V-5 L10 0 L4.5 5 V2.4 H-4.5 V5Z" fill="#f4f4f4" stroke="#cfcfcf" stroke-width="0.5"/></svg>
<div class="t" style="left:278px;width:200px;text-align:center;top:139.5px;color:#1e1e1e;letter-spacing:-0.1px">New</div>
<div class="t" style="left:324.6px;width:200px;text-align:center;top:139.5px;color:#1e1e1e;letter-spacing:0px">From</div>
<div class="t" style="left:325px;width:200px;text-align:center;top:153.5px;color:#1e1e1e;letter-spacing:-0.2px">Template</div>
<div class="t" style="left:371.5px;width:200px;text-align:center;top:139.5px;color:#1e1e1e;letter-spacing:0px">From</div>
<div class="t" style="left:371.5px;width:200px;text-align:center;top:153.5px;color:#1e1e1e;letter-spacing:0px">V7</div>
<svg style="left:463px;top:105px" width="24" height="29" viewBox="0 0 24 29"><path d="M1.5 1 L14.5 3 V27 L1.5 23Z" fill="#eaf3fc" stroke="#b8cfe8" stroke-width="0.8"/><path d="M3 4.2l10 1.6M3 6.7l10 1.6M3 9.2l10 1.6M3 11.7l10 1.6M3 14.200000000000001l10 1.6M3 16.7l10 1.6M3 19.2l10 1.6M3 21.7l10 1.6" stroke="#9dbde6" stroke-width="0.9"/><path d="M22 6.5 C19 11 16 12.5 13 12.8 V15.5 L7 11 L13 6.5 V9 C16 9.3 19 8.6 22 6.5Z" fill="#27a83a" stroke="#178a28" stroke-width="0.5"/></svg>
<svg style="left:520px;top:100px" width="30" height="40" viewBox="520 100 30 40"><ellipse cx="533" cy="133.6" rx="9" ry="1.2" fill="#9a9a9a" opacity="0.6"/><path d="M526 105.8 L541 108 V134 L526 131.2Z" fill="#e9f1f7" stroke="#7fa5c7" stroke-width="0.9"/><path d="M526.8 119.5 L540.4 113 V133 L526.8 130.4Z" fill="#c9d9e3" opacity="0.85"/><path d="M526 131.2 L541 134 V108" fill="none" stroke="#4a5560" stroke-width="1"/></svg>
<div class="t" style="left:433.20000000000005px;width:200px;text-align:center;top:139.5px;color:#1e1e1e;letter-spacing:0.06px">Import From</div>
<div class="t" style="left:433.5px;width:200px;text-align:center;top:153.5px;color:#1e1e1e;letter-spacing:0px">Document</div>
<svg style="left:590px;top:100px" width="32" height="40" viewBox="590 100 32 40"><ellipse cx="601" cy="133.6" rx="9" ry="1.2" fill="#9a9a9a" opacity="0.6"/><path d="M595 105.8 L610 108 V134 L595 131.2Z" fill="#e9f1f7" stroke="#7fa5c7" stroke-width="0.9"/><path d="M595.8 119.5 L609.4 113 V133 L595.8 130.4Z" fill="#c9d9e3" opacity="0.85"/><path d="M595 131.2 L610 134 V108" fill="none" stroke="#4a5560" stroke-width="1"/><g fill="none" stroke="#6f767d" stroke-width="3.6"><ellipse cx="611.3" cy="118.2" rx="3.4" ry="6" transform="rotate(48 611.3 118.2)"/><ellipse cx="601.2" cy="129.3" rx="3.4" ry="6" transform="rotate(48 601.2 129.3)"/></g><path d="M608.8 120.8 L603.6 126.6" stroke="#7d848b" stroke-width="3.8"/><g fill="none" stroke="#c3c9cf" stroke-width="1.2"><ellipse cx="611.3" cy="118.2" rx="3.4" ry="6" transform="rotate(48 611.3 118.2)"/><ellipse cx="601.2" cy="129.3" rx="3.4" ry="6" transform="rotate(48 601.2 129.3)"/></g></svg>
<div class="t" style="left:501.29999999999995px;width:200px;text-align:center;top:139.5px;color:#1e1e1e;letter-spacing:0px">Link To</div>
<div class="t" style="left:501.5px;width:200px;text-align:center;top:153.5px;color:#1e1e1e;letter-spacing:0px">Document</div>
<svg style="left:648px;top:107px" width="34" height="27" viewBox="0 0 34 27"><path d="M2 18 L14 2.5 L32.5 6 L21 23.5Z" fill="#e4e7ea" stroke="#8d949b" stroke-width="0.9"/><path d="M2 18 L21 23.5 V26 L2 20.5Z" fill="#8d949b"/><path d="M21 23.5 L32.5 6 V8.5 L21 26Z" fill="#a9b0b6"/><path d="M13 4.5 L30 7.8" stroke="#72797f" stroke-width="2.2" stroke-dasharray="1.2 1"/><ellipse cx="16.5" cy="15" rx="7" ry="4" fill="#2f7fd6" transform="rotate(-12 16.5 15)"/><path d="M16.5 15 L23 12.8 A7 4 -12 0 0 15 11.1Z" fill="#e0424c"/><path d="M16.5 15 L15 11.1 A7 4 -12 0 0 10 13.6Z" fill="#3fb84a"/></svg>
<div class="t" style="left:564.3px;width:200px;text-align:center;top:139.5px;color:#1e1e1e;letter-spacing:-0.25px">Link To SM</div>
<div class="t" style="left:564.5px;width:200px;text-align:center;top:153.5px;color:#1e1e1e;letter-spacing:0px">Document</div>
<svg style="left:700px;top:104px" width="16" height="17" viewBox="0 0 16 17"><defs><radialGradient id="gl" cx="0.35" cy="0.3" r="0.8"><stop offset="0" stop-color="#bfe6ff"/><stop offset="0.5" stop-color="#3c96e0"/><stop offset="1" stop-color="#1d3f9a"/></radialGradient></defs><circle cx="6.8" cy="7" r="6.6" fill="url(#gl)"/><path d="M3 2.5 C5.5 1.2 8 2.5 7 4.8 C6 7 3.5 6.5 2.2 8.8 C1.2 7 1.4 4.2 3 2.5Z M3.5 9.5 C5.5 9 8 10.5 7 12.6 C5.5 12.8 4.2 11.5 3.5 9.5Z M9.5 2.2 C11.5 3 12.6 4.5 12.8 6 C11.5 6 10 4.5 9.5 2.2Z" fill="#7cc242"/><rect x="9" y="6" width="6.3" height="10" fill="#eef1f4" stroke="#9aa3ab" stroke-width="0.7"/><path d="M10.2 8.3h3.9M10.2 10.2h3.9M10.2 12.1h3.9M10.2 14h3.9" stroke="#8b949c" stroke-width="0.8"/></svg>
<div class="t" style="left:719.5px;top:106.2px;color:#1e1e1e;letter-spacing:-0.19px;">From Library</div>
<svg style="left:699px;top:126px" width="18" height="18" viewBox="0 0 18 18"><g transform="translate(6.5 10)" fill="#e9eff2" stroke="#2c5b73" stroke-width="1.3"><circle r="3.8"/><path d="M4.2 0.0L5.8 0.0" stroke-width="2.2"/><path d="M3.0 3.0L4.1 4.1" stroke-width="2.2"/><path d="M0.0 4.2L0.0 5.8" stroke-width="2.2"/><path d="M-3.0 3.0L-4.1 4.1" stroke-width="2.2"/><path d="M-4.2 0.0L-5.8 0.0" stroke-width="2.2"/><path d="M-3.0 -3.0L-4.1 -4.1" stroke-width="2.2"/><path d="M-0.0 -4.2L-0.0 -5.8" stroke-width="2.2"/><path d="M3.0 -3.0L4.1 -4.1" stroke-width="2.2"/></g><g transform="translate(12.5 4.5)" fill="#e9eff2" stroke="#2c5b73" stroke-width="1.1"><circle r="2.4"/><path d="M2.6 0.0L3.7 0.0" stroke-width="1.4"/><path d="M1.3 2.3L1.9 3.2" stroke-width="1.4"/><path d="M-1.3 2.3L-1.8 3.2" stroke-width="1.4"/><path d="M-2.6 0.0L-3.7 0.0" stroke-width="1.4"/><path d="M-1.3 -2.3L-1.9 -3.2" stroke-width="1.4"/><path d="M1.3 -2.3L1.9 -3.2" stroke-width="1.4"/></g><rect x="10" y="8.5" width="6.5" height="8.5" fill="#f2f4f6" stroke="#8c959e" stroke-width="0.8"/><path d="M11.3 11h3.8M11.3 13h3.8M11.3 15h3.8" stroke="#9aa3ab" stroke-width="0.8"/></svg>
<div class="t" style="left:719.5px;top:128.5px;color:#1e1e1e;letter-spacing:-0.27px;">From Any Process</div>
<svg style="left:700px;top:150px" width="16" height="16" viewBox="0 0 16 16" fill="none" stroke="#12126e" stroke-width="2.5"><ellipse cx="4.6" cy="4.4" rx="2.6" ry="3.9" transform="rotate(-52 4.6 4.4)"/><ellipse cx="11.4" cy="11.4" rx="2.6" ry="3.9" transform="rotate(-52 11.4 11.4)"/><path d="M5.6 5.2 L10.4 10.6" stroke-width="2.7"/></svg>
<div class="t" style="left:719.5px;top:151.7px;color:#1e1e1e;letter-spacing:-0.5px;">From URL</div>
<div class="t" style="left:743.2px;width:200px;text-align:center;top:139.5px;color:#1e1e1e;letter-spacing:-0.2px">Delete</div>
<svg style="left:876px;top:105px" width="25" height="29" viewBox="0 0 25 29"><path d="M3.5 2 L15 0.8 L17 22 L5 24Z" fill="#eef2fa" stroke="#bcc8dc" stroke-width="0.8"/><path d="M4.5 17 L16.5 15.5 L17 22 L5 24Z" fill="#dfe4f4"/><path d="M6 6 L8.5 8.5 L12.5 4" stroke="#37b53c" stroke-width="1.8" fill="none"/><path d="M21 2 L23.5 3.2 L14.5 22 L11.5 25 L12 20.8Z" fill="#2db43a" stroke="#1c8a28" stroke-width="0.5"/><path d="M12 20.8 L14.5 22 L11.5 25Z" fill="#e9c58e"/></svg>
<div class="t" style="left:788.2px;width:200px;text-align:center;top:139.5px;color:#1e1e1e;letter-spacing:-0.2px">Mark as</div>
<div class="t" style="left:788.5px;width:200px;text-align:center;top:153.5px;color:#1e1e1e;letter-spacing:-0.1px">Primary</div>
<div class="t" style="left:362.9px;top:172.6px;color:#1e1e1e;letter-spacing:0px;">Create Work Instruction</div>
<div class="t" style="left:624px;top:172.6px;color:#1e1e1e;letter-spacing:-0.12px;">Add Element</div>
<div class="t" style="left:835.3px;top:172.6px;color:#1e1e1e;letter-spacing:-0.2px;">Edit Element</div>
<svg style="left:1534px;top:92px" width="30" height="32" viewBox="0 0 30 32"><path d="M8 17 H14 V5 H20 M14 17 H21 M14 17 V29 H17" fill="none" stroke="#aeb6be" stroke-width="1.2"/><path d="M8 24 L24 24" stroke="#c8ced4" stroke-width="2" opacity="0.7"/><rect x="1.5" y="11" width="10" height="11" fill="#5b93d6" stroke="#3b6fb4" stroke-width="0.8" transform="skewY(-6)" transform-origin="6 16"/><rect x="3.5" y="13.8" width="5.5" height="4.5" fill="#a9c9ef" opacity="0.8"/><rect x="12.5" y="6.5" width="6" height="7.5" fill="#2fa85a" transform="rotate(8 15 10)"/><rect x="19.5" y="1.5" width="5" height="5.5" fill="#d0303c" transform="rotate(12 22 4)"/><rect x="20" y="15" width="5" height="5.5" fill="#d0303c" transform="rotate(12 22 17)"/><rect x="13" y="24.5" width="6" height="6.5" fill="#2fa85a" transform="rotate(6 16 27)"/></svg>
<div class="t" style="left:1526px;top:125.6px;color:#1e1e1e;letter-spacing:0px;">Material</div>
<div class="t" style="left:1526px;top:141.6px;color:#1e1e1e;letter-spacing:0px;">Setup</div>
<div class="t" style="left:1586.7px;top:125.6px;color:#1e1e1e;letter-spacing:-0.14px;">Entry / Exit</div>
<svg style="left:1667px;top:92px" width="27" height="31" viewBox="0 0 27 31"><path d="M3 28 L24 29.5" stroke="#c9d3dc" stroke-width="2" opacity="0.7"/><path d="M2 2 L23.5 3.5 V28 L2 26Z" fill="#8cc4ec"/><path d="M3.5 3.5 L21.5 5 V26.5 L3.5 24.6Z" fill="#f2f7fb"/><path d="M6 8l5 .4M6 10.5l6 .5M6 13l5 .4M6 15.500000000000002l6 .5M6 18l5 .4M6 20.5l4 .3M14 8.7l5.5 .4M15 11.2l4.500000000000001 .4M14 13.7l5.5 .4M15 16.2l4.500000000000001 .4M14 18.7l5.5 .4M13 22.5l6 .5" stroke="#a8b0b8" stroke-width="0.9"/></svg>
<div class="t" style="left:1660.5px;top:125.6px;color:#1e1e1e;letter-spacing:-0.6px;">Recipes</div>
<div class="a" style="left:346px;top:201px;width:1386px;height:810px;background:#373737"></div>
<div class="a" style="left:1731px;top:201px;width:1px;height:810px;background:#c4c4c4"></div>
<div class="a" style="left:346px;top:1010px;width:1386px;height:1px;background:#c4c4c4"></div>
<div class="a" style="left:1731px;top:59px;width:1px;height:142px;background:#d0d0d0"></div>
<div class="t" style="left:357.5px;top:218.5px;height:36px;line-height:36px;font-size:31px;font-weight:400;color:#101010;letter-spacing:0.97px;-webkit-text-stroke:0.9px #101010">This operation is not set up. What do you want to do?</div>
<!--MAIN_END-->
<!--DIALOG_START-->
<!-- ===== DIALOG ===== -->
<div class="a" style="left:366px;top:251px;width:1315px;height:709px;background:#c3cfd7"></div>
<div class="a" style="left:346px;top:302px;width:20px;height:658px;background:#c3cfd7"></div>
<div class="t" style="left:387.5px;top:268.5px;height:24px;line-height:24px;font-size:18px;color:#33425c;letter-spacing:-0.8px">Settings</div>
<div class="a" style="left:1636px;top:273px;width:18px;height:18px;border:1px solid #9aa3aa;background:#dde1e4"></div>
<svg style="left:1638px;top:275px" width="14" height="14" viewBox="-7 -7 14 14"><circle r="6.3" fill="#e8e8e8" stroke="#666" stroke-width="0.8"/><circle r="4.6" fill="#e0283a" stroke="#8a1a22" stroke-width="0.5"/><path d="M-2.3 -2.3L2.3 2.3M2.3 -2.3L-2.3 2.3" stroke="#fff" stroke-width="1.6"/></svg>
<div class="a" style="left:378px;top:320px;width:1291px;height:596px;background:#fff;border:1px solid #acacac"></div>
<div class="a" style="left:431px;top:298px;width:89px;height:23px;border:1px solid #acacac;background:linear-gradient(#f2f2f2,#e6e6e6)"></div>
<div class="a" style="left:519px;top:298px;width:92px;height:23px;border:1px solid #acacac;background:linear-gradient(#f2f2f2,#e6e6e6)"></div>
<div class="a" style="left:381px;top:296px;width:51px;height:25px;border:1px solid #acacac;border-bottom:none;background:#fff"></div>
<div class="t" style="left:390px;top:303.2px;color:#1e1e1e;letter-spacing:-0.7px;">Basics</div>
<div class="t" style="left:439.8px;top:303.2px;color:#1e1e1e;letter-spacing:0.02px;">Color Coding</div>
<div class="t" style="left:527.8px;top:303.2px;color:#1e1e1e;letter-spacing:-0.02px;">Option Codes</div>
<div class="t" style="left:393px;top:336.8px;color:#1e1e1e;letter-spacing:0px;">Name</div>
<div class="a" style="left:545px;top:335px;width:1041px;height:22px;border:1px solid #abadb3;background:#fff"></div>
<div class="t" style="left:550px;top:340px;color:#1e1e1e;letter-spacing:-0.15px;">Standard Step #1</div>
<div class="a" style="left:1590px;top:335px;width:30px;height:22px;border:1px solid #acacac;background:#f3f3f3"></div>
<div class="a" style="left:1592px;top:337px;width:26px;height:18px;border:1px solid #c9c9c9;background:linear-gradient(#f1f1f1,#dedede)"></div>
<div class="a" style="left:1624px;top:335px;width:30px;height:22px;border:1px solid #acacac;background:#f3f3f3"></div>
<div class="a" style="left:1626px;top:337px;width:26px;height:18px;border:1px solid #c9c9c9;background:linear-gradient(#f1f1f1,#dedede)"></div>
<svg style="left:1597px;top:338.5px" width="16" height="15" viewBox="0 0 16 15" fill="none" stroke="#111"><rect x="4" y="0.8" width="11" height="9.5" rx="1" stroke-width="1.2" fill="#e8e8e8"/><path d="M4 3h11" stroke-width="1.6"/><rect x="1" y="4.2" width="11" height="10" rx="1" stroke-width="1.2" fill="#e8e8e8"/><path d="M1 6.6h11" stroke-width="2"/><path d="M2.8 9h4M2.8 10.8h4M2.8 12.6h4" stroke-width="0.9"/><rect x="7.8" y="8.6" width="2.8" height="4.4" fill="#111" stroke="none"/></svg>
<svg style="left:1631px;top:338.5px" width="17" height="15" viewBox="0 0 17 15" fill="none" stroke="#111"><rect x="4" y="0.8" width="11" height="9.5" rx="1" stroke-width="1.2" fill="#e8e8e8"/><path d="M4 3h11" stroke-width="1.6"/><rect x="1" y="4.2" width="11" height="10" rx="1" stroke-width="1.2" fill="#e8e8e8"/><path d="M1 6.6h11" stroke-width="2"/><path d="M2.8 9h4M2.8 10.8h4M2.8 12.6h4" stroke-width="0.9"/><rect x="10" y="8.5" width="6.5" height="6.5" fill="#111" stroke="none"/><rect x="11.5" y="8.5" width="3.5" height="2.4" fill="#e8e8e8" stroke="none"/><rect x="11.5" y="12.2" width="3.5" height="2.8" fill="#e8e8e8" stroke="none"/></svg>
<div class="t" style="left:393px;top:366px;color:#1e1e1e;letter-spacing:-0.03px;">Operator Interface Template</div>
<div class="a" style="left:545px;top:361px;width:1109px;height:22px;border:1px solid #acacac;background:#fff"></div>
<div class="t" style="left:550px;top:366px;color:#1e1e1e;letter-spacing:-0.03px;">Operator Interface Template</div>
<div class="a" style="left:1637px;top:363px;width:15px;height:18px;border:1px solid #b5b5b5;background:linear-gradient(#f4f4f4,#e4e4e4)"></div><svg style="left:1640px;top:369px" width="9" height="6" viewBox="0 0 9 6"><path d="M0.7 0.7L4.5 4.7L8.3 0.7" fill="none" stroke="#444" stroke-width="1.2"/></svg>
<div class="t" style="left:393px;top:391.7px;color:#1e1e1e;letter-spacing:-0.04px;">Assigned Workstation</div>
<div class="a" style="left:545px;top:387px;width:1109px;height:22px;border:1px solid #acacac;background:#fff"></div>
<div class="t" style="left:550px;top:391.7px;color:#1e1e1e;letter-spacing:-0.03px;">Select Workstation</div>
<div class="a" style="left:1626px;top:389px;width:26px;height:18px;border:1px solid #a8a8a8;background:linear-gradient(#f4f4f4,#e2e2e2)"></div>
<svg style="left:1636px;top:396px" width="7" height="4" viewBox="0 0 7 4"><path d="M0 0H7L3.5 3.6Z" fill="#111"/></svg>
<div class="a" style="left:545px;top:418px;width:13px;height:13px;border:1px solid #707070;background:#fff"></div>
<div class="t" style="left:562px;top:417.6px;color:#1e1e1e;letter-spacing:-0.03px;">Any Order Mode (Activities can be viewed in any order)</div>
<div class="a" style="left:545px;top:444px;width:13px;height:13px;border:1px solid #707070;background:#fff"></div>
<div class="t" style="left:562px;top:443.6px;color:#1e1e1e;letter-spacing:-0.33px;">Is Step Required?</div>
<div class="a" style="left:545px;top:485px;width:13px;height:13px;border:1px solid #707070;background:#fff"></div>
<div class="t" style="left:562px;top:484.6px;color:#1e1e1e;letter-spacing:0.04px;">Activities may be executed without starting a unit</div>
<div class="t" style="left:393px;top:510.6px;color:#1e1e1e;letter-spacing:-0.3px;">Frequency:</div>
<div class="a" style="left:545px;top:506px;width:1109px;height:22px;border:1px solid #acacac;background:#fff"></div>
<div class="t" style="left:550px;top:510.7px;color:#1e1e1e;letter-spacing:-0.25px;">Every Item</div>
<div class="a" style="left:1637px;top:508px;width:15px;height:18px;border:1px solid #b5b5b5;background:linear-gradient(#f4f4f4,#e4e4e4)"></div><svg style="left:1640px;top:514px" width="9" height="6" viewBox="0 0 9 6"><path d="M0.7 0.7L4.5 4.7L8.3 0.7" fill="none" stroke="#444" stroke-width="1.2"/></svg>
<div class="t" style="left:395px;top:555.7px;color:#1e1e1e;letter-spacing:-0.07px;">Activity Tracking</div>
<div class="a" style="left:546px;top:558px;width:14px;height:14px;border:1px solid #6e6e6e;border-radius:50%;background:#fff"></div><div class="t" style="left:564.3px;top:559.4px;color:#1e1e1e;letter-spacing:-0.24px;">By Current User</div>
<div class="a" style="left:546px;top:584px;width:14px;height:14px;border:1px solid #6e6e6e;border-radius:50%;background:#fff"></div><div class="t" style="left:564.3px;top:585.4px;color:#1e1e1e;letter-spacing:-0.2px;">By User Group</div>
<div class="a" style="left:546px;top:610px;width:14px;height:14px;border:1px solid #6e6e6e;border-radius:50%;background:#fff"></div><div class="t" style="left:564.3px;top:611.4px;color:#1e1e1e;letter-spacing:-0.4px;">By User Role</div>
<div class="a" style="left:546px;top:636px;width:14px;height:14px;border:1px solid #6e6e6e;border-radius:50%;background:#fff"></div><div class="a" style="left:549px;top:639px;width:8px;height:8px;border-radius:50%;background:#1a1a1a"></div><div class="t" style="left:564.3px;top:637.4px;color:#1e1e1e;letter-spacing:0px;">No</div>
<div class="t" style="left:395px;top:679.9px;color:#1e1e1e;letter-spacing:-0.2px;">Approval Process:</div>
<div class="a" style="left:546px;top:682px;width:14px;height:14px;border:1px solid #6e6e6e;border-radius:50%;background:#fff"></div><div class="t" style="left:564.3px;top:683.4px;color:#1e1e1e;letter-spacing:-0.9px;">Yes</div>
<div class="a" style="left:546px;top:708px;width:14px;height:14px;border:1px solid #6e6e6e;border-radius:50%;background:#fff"></div><div class="a" style="left:549px;top:711px;width:8px;height:8px;border-radius:50%;background:#1a1a1a"></div><div class="t" style="left:564.3px;top:709.4px;color:#1e1e1e;letter-spacing:0px;">No</div>
<div class="a" style="left:1591px;top:928px;width:75px;height:22px;border:1px solid #8e9aa3;background:linear-gradient(#f3f3f3,#e3e3e3)"></div>
<div class="t" style="left:1591px;width:75px;text-align:center;top:933px;color:#1e1e1e">OK</div>
<div class="a" style="left:342px;top:527px;width:2px;height:14px;background:repeating-linear-gradient(#9a9a9a 0 1px,#fff 1px 2px)"></div>
<!--DIALOG_END-->
<!--MENU_START-->
<!-- ===== DROPDOWN MENU ===== -->
<div class="a" style="left:23px;top:349px;width:231px;height:690px;border:1px solid #a2a2a2;background:#fff;box-shadow:1px 1px 2px rgba(0,0,0,0.18)"></div>
<div class="a" style="left:25px;top:399px;width:227px;height:22px;background:#cfe5f8"></div>
<svg style="left:32px;top:354.5px" width="17" height="15" viewBox="0 0 17 15"><path d="M1 1.5 L13.5 3.5 V12.5 L1 10.5Z" fill="#e3ebf2" stroke="#b5c3d0" stroke-width="0.7"/><path d="M3 2.6 L15 4.6 V13.4 L3 11.4Z" fill="#eef3f8" stroke="#a9bccd" stroke-width="0.7"/><path d="M3 2.6 L15 4.6 V6.4 L3 4.4Z" fill="#b9d3ea"/><path d="M6 4.5 L10.7 11.5 L15.3 7.5" fill="none" stroke="#1d9a1d" stroke-width="3.1" stroke-linejoin="miter"/><path d="M6.2 5 L10.7 11.3 L15 7.7" fill="none" stroke="#4fd73c" stroke-width="1.5"/></svg>
<div class="t" style="left:56px;top:355.5px;color:#2b2b2b;letter-spacing:-0.168px">Create Step From Template</div>
<svg style="left:32px;top:379.5px" width="17" height="15" viewBox="0 0 17 15"><path d="M1 1.5 L13.5 3.5 V12.5 L1 10.5Z" fill="#e3ebf2" stroke="#b5c3d0" stroke-width="0.7"/><path d="M3 2.6 L15 4.6 V13.4 L3 11.4Z" fill="#eef3f8" stroke="#a9bccd" stroke-width="0.7"/><path d="M3 2.6 L15 4.6 V6.4 L3 4.4Z" fill="#b9d3ea"/><path d="M6 4.5 L10.7 11.5 L15.3 7.5" fill="none" stroke="#1d9a1d" stroke-width="3.1" stroke-linejoin="miter"/><path d="M6.2 5 L10.7 11.3 L15 7.7" fill="none" stroke="#4fd73c" stroke-width="1.5"/></svg>
<div class="t" style="left:56px;top:380.5px;color:#2b2b2b;letter-spacing:-0.002px">Initialization Step</div>
<svg style="left:32px;top:402.5px" width="17" height="15" viewBox="0 0 17 15"><path d="M1 1.5 L13.5 3.5 V12.5 L1 10.5Z" fill="#e3ebf2" stroke="#b5c3d0" stroke-width="0.7"/><path d="M3 2.6 L15 4.6 V13.4 L3 11.4Z" fill="#eef3f8" stroke="#a9bccd" stroke-width="0.7"/><path d="M3 2.6 L15 4.6 V6.4 L3 4.4Z" fill="#b9d3ea"/><path d="M6 4.5 L10.7 11.5 L15.3 7.5" fill="none" stroke="#1d9a1d" stroke-width="3.1" stroke-linejoin="miter"/><path d="M6.2 5 L10.7 11.3 L15 7.7" fill="none" stroke="#4fd73c" stroke-width="1.5"/></svg>
<div class="t" style="left:56px;top:403.5px;color:#2b2b2b;letter-spacing:-0.195px">Standard Step</div>
<svg style="left:32px;top:425.5px" width="17" height="15" viewBox="0 0 17 15"><path d="M1 1.5 L13.5 3.5 V12.5 L1 10.5Z" fill="#e3ebf2" stroke="#b5c3d0" stroke-width="0.7"/><path d="M3 2.6 L15 4.6 V13.4 L3 11.4Z" fill="#eef3f8" stroke="#a9bccd" stroke-width="0.7"/><path d="M3 2.6 L15 4.6 V6.4 L3 4.4Z" fill="#b9d3ea"/><path d="M6 4.5 L10.7 11.5 L15.3 7.5" fill="none" stroke="#1d9a1d" stroke-width="3.1" stroke-linejoin="miter"/><path d="M6.2 5 L10.7 11.3 L15 7.7" fill="none" stroke="#4fd73c" stroke-width="1.5"/></svg>
<div class="t" style="left:56px;top:426.5px;color:#2b2b2b;letter-spacing:-0.124px">Color Coded Step</div>
<svg style="left:32px;top:448.5px" width="17" height="15" viewBox="0 0 17 15"><path d="M1 1.5 L13.5 3.5 V12.5 L1 10.5Z" fill="#e3ebf2" stroke="#b5c3d0" stroke-width="0.7"/><path d="M3 2.6 L15 4.6 V13.4 L3 11.4Z" fill="#eef3f8" stroke="#a9bccd" stroke-width="0.7"/><path d="M3 2.6 L15 4.6 V6.4 L3 4.4Z" fill="#b9d3ea"/><path d="M6 4.5 L10.7 11.5 L15.3 7.5" fill="none" stroke="#1d9a1d" stroke-width="3.1" stroke-linejoin="miter"/><path d="M6.2 5 L10.7 11.3 L15 7.7" fill="none" stroke="#4fd73c" stroke-width="1.5"/></svg>
<div class="t" style="left:56px;top:449.5px;color:#2b2b2b;letter-spacing:-0.071px">Guided Inspection Step</div>
<svg style="left:32px;top:471.5px" width="17" height="15" viewBox="0 0 17 15"><path d="M1 1.5 L13.5 3.5 V12.5 L1 10.5Z" fill="#e3ebf2" stroke="#b5c3d0" stroke-width="0.7"/><path d="M3 2.6 L15 4.6 V13.4 L3 11.4Z" fill="#eef3f8" stroke="#a9bccd" stroke-width="0.7"/><path d="M3 2.6 L15 4.6 V6.4 L3 4.4Z" fill="#b9d3ea"/><path d="M6 4.5 L10.7 11.5 L15.3 7.5" fill="none" stroke="#1d9a1d" stroke-width="3.1" stroke-linejoin="miter"/><path d="M6.2 5 L10.7 11.3 L15 7.7" fill="none" stroke="#4fd73c" stroke-width="1.5"/></svg>
<div class="t" style="left:56px;top:472.5px;color:#2b2b2b;letter-spacing:-0.059px">First Article Inspection Step</div>
<svg style="left:32px;top:494.5px" width="17" height="15" viewBox="0 0 17 15"><path d="M1 1.5 L13.5 3.5 V12.5 L1 10.5Z" fill="#e3ebf2" stroke="#b5c3d0" stroke-width="0.7"/><path d="M3 2.6 L15 4.6 V13.4 L3 11.4Z" fill="#eef3f8" stroke="#a9bccd" stroke-width="0.7"/><path d="M3 2.6 L15 4.6 V6.4 L3 4.4Z" fill="#b9d3ea"/><path d="M6 4.5 L10.7 11.5 L15.3 7.5" fill="none" stroke="#1d9a1d" stroke-width="3.1" stroke-linejoin="miter"/><path d="M6.2 5 L10.7 11.3 L15 7.7" fill="none" stroke="#4fd73c" stroke-width="1.5"/></svg>
<div class="t" style="left:56px;top:495.5px;color:#2b2b2b;letter-spacing:-0.233px">Packout Step</div>
<svg style="left:32px;top:517.5px" width="17" height="15" viewBox="0 0 17 15"><path d="M1 1.5 L13.5 3.5 V12.5 L1 10.5Z" fill="#e3ebf2" stroke="#b5c3d0" stroke-width="0.7"/><path d="M3 2.6 L15 4.6 V13.4 L3 11.4Z" fill="#eef3f8" stroke="#a9bccd" stroke-width="0.7"/><path d="M3 2.6 L15 4.6 V6.4 L3 4.4Z" fill="#b9d3ea"/><path d="M6 4.5 L10.7 11.5 L15.3 7.5" fill="none" stroke="#1d9a1d" stroke-width="3.1" stroke-linejoin="miter"/><path d="M6.2 5 L10.7 11.3 L15 7.7" fill="none" stroke="#4fd73c" stroke-width="1.5"/></svg>
<div class="t" style="left:56px;top:518.5px;color:#2b2b2b;letter-spacing:-0.2px">Load Carrier</div>
<svg style="left:32px;top:540.5px" width="17" height="15" viewBox="0 0 17 15"><path d="M1 1.5 L13.5 3.5 V12.5 L1 10.5Z" fill="#e3ebf2" stroke="#b5c3d0" stroke-width="0.7"/><path d="M3 2.6 L15 4.6 V13.4 L3 11.4Z" fill="#eef3f8" stroke="#a9bccd" stroke-width="0.7"/><path d="M3 2.6 L15 4.6 V6.4 L3 4.4Z" fill="#b9d3ea"/><path d="M6 4.5 L10.7 11.5 L15.3 7.5" fill="none" stroke="#1d9a1d" stroke-width="3.1" stroke-linejoin="miter"/><path d="M6.2 5 L10.7 11.3 L15 7.7" fill="none" stroke="#4fd73c" stroke-width="1.5"/></svg>
<div class="t" style="left:56px;top:541.5px;color:#2b2b2b;letter-spacing:-0.399px">Task List</div>
<svg style="left:32px;top:563.5px" width="17" height="15" viewBox="0 0 17 15"><path d="M1 1.5 L13.5 3.5 V12.5 L1 10.5Z" fill="#e3ebf2" stroke="#b5c3d0" stroke-width="0.7"/><path d="M3 2.6 L15 4.6 V13.4 L3 11.4Z" fill="#eef3f8" stroke="#a9bccd" stroke-width="0.7"/><path d="M3 2.6 L15 4.6 V6.4 L3 4.4Z" fill="#b9d3ea"/><path d="M6 4.5 L10.7 11.5 L15.3 7.5" fill="none" stroke="#1d9a1d" stroke-width="3.1" stroke-linejoin="miter"/><path d="M6.2 5 L10.7 11.3 L15 7.7" fill="none" stroke="#4fd73c" stroke-width="1.5"/></svg>
<div class="t" style="left:56px;top:564.5px;color:#2b2b2b;letter-spacing:-0.022px">Capture New Material</div>
<svg style="left:32px;top:586.5px" width="17" height="15" viewBox="0 0 17 15"><path d="M1 1.5 L13.5 3.5 V12.5 L1 10.5Z" fill="#e3ebf2" stroke="#b5c3d0" stroke-width="0.7"/><path d="M3 2.6 L15 4.6 V13.4 L3 11.4Z" fill="#eef3f8" stroke="#a9bccd" stroke-width="0.7"/><path d="M3 2.6 L15 4.6 V6.4 L3 4.4Z" fill="#b9d3ea"/><path d="M6 4.5 L10.7 11.5 L15.3 7.5" fill="none" stroke="#1d9a1d" stroke-width="3.1" stroke-linejoin="miter"/><path d="M6.2 5 L10.7 11.3 L15 7.7" fill="none" stroke="#4fd73c" stroke-width="1.5"/></svg>
<div class="t" style="left:56px;top:587.5px;color:#2b2b2b;letter-spacing:-0.198px">Composer Step</div>
<div class="a" style="left:55px;top:374px;width:196px;height:1px;background:#d7d7d7"></div>
<div class="a" style="left:55px;top:606px;width:196px;height:1px;background:#d7d7d7"></div>
<div class="a" style="left:55px;top:631px;width:196px;height:1px;background:#d7d7d7"></div>
<div class="a" style="left:55px;top:932px;width:196px;height:1px;background:#d7d7d7"></div>
<svg style="left:32px;top:611px;opacity:0.5" width="16" height="16" viewBox="0 0 16 16"><rect x="1.5" y="2" width="10" height="12.5" rx="1" fill="#f0dcae" stroke="#d6b672" stroke-width="0.8"/><rect x="3.3" y="3.8" width="6.4" height="8.5" fill="#fbfbf6"/><path d="M4.5 6h4M4.5 8h4" stroke="#9aa" stroke-width="0.8"/><path d="M7.5 10.5 L10.5 13.5 L15.5 7.5" stroke="#2fae3a" stroke-width="2.3" fill="none"/></svg>
<div class="t" style="left:56px;top:612.5px;color:#b6b6b6;letter-spacing:-0.024px">Basic Instruction Activity</div>
<svg style="left:32px;top:636px;opacity:0.5" width="16" height="16" viewBox="0 0 16 16"><rect x="1.5" y="3" width="13" height="12" rx="1" fill="#fff" stroke="#9a9a9a" stroke-width="0.9"/><rect x="1.5" y="3" width="13" height="3.6" fill="#e8505a"/><rect x="4" y="1" width="1.6" height="3.4" fill="#bbb"/><rect x="10.4" y="1" width="1.6" height="3.4" fill="#bbb"/><text x="8" y="13.3" font-size="7" font-family="Liberation Sans, sans-serif" font-weight="700" text-anchor="middle" fill="#444">15</text></svg>
<div class="t" style="left:56px;top:637.5px;color:#b6b6b6;letter-spacing:0.018px">Collect a Date / Time Activity</div>
<svg style="left:32px;top:659px;opacity:0.5" width="16" height="16" viewBox="0 0 16 16"><rect x="1.5" y="3" width="13" height="12" rx="1" fill="#fff" stroke="#9a9a9a" stroke-width="0.9"/><rect x="1.5" y="3" width="13" height="3.6" fill="#e8505a"/><rect x="4" y="1" width="1.6" height="3.4" fill="#bbb"/><rect x="10.4" y="1" width="1.6" height="3.4" fill="#bbb"/><text x="8" y="13.3" font-size="7" font-family="Liberation Sans, sans-serif" font-weight="700" text-anchor="middle" fill="#444">15</text></svg>
<div class="t" style="left:56px;top:660.5px;color:#b6b6b6;letter-spacing:-0.043px">Collect a Date / Time Range Activity</div>
<svg style="left:32px;top:682px;opacity:0.5" width="16" height="16" viewBox="0 0 16 16"><path d="M2 1.5 L14 3 V15 L2 13.5Z" fill="#eef4f8" stroke="#cdd7df" stroke-width="0.8"/><text x="8" y="12" font-size="9" font-family="Liberation Sans, sans-serif" font-weight="700" text-anchor="middle" fill="#777" letter-spacing="-0.8">01</text></svg>
<div class="t" style="left:56px;top:683.5px;color:#b6b6b6;letter-spacing:0.036px">Collect a Number Activity</div>
<svg style="left:32px;top:705px;opacity:0.5" width="16" height="16" viewBox="0 0 16 16"><path d="M2 1.5 L14 3 V15 L2 13.5Z" fill="#eef4f8" stroke="#cdd7df" stroke-width="0.8"/><text x="8" y="12" font-size="9" font-family="Liberation Sans, sans-serif" font-weight="700" text-anchor="middle" fill="#777" letter-spacing="-0.8">01</text></svg>
<div class="t" style="left:56px;top:706.5px;color:#b6b6b6;letter-spacing:-0.038px">Collect a Number Range Activity</div>
<svg style="left:32px;top:728px;opacity:0.5" width="16" height="16" viewBox="0 0 16 16"><path d="M2 1.5 L14 3 V15 L2 13.5Z" fill="#eef4f8" stroke="#cdd7df" stroke-width="0.8"/><path d="M4.5 4h7v2.2h-2.3V13H6.8V6.2H4.5Z" fill="#8a8a8a"/></svg>
<div class="t" style="left:56px;top:729.5px;color:#b6b6b6;letter-spacing:-0.009px">Collect Text Activity</div>
<svg style="left:32px;top:751px;opacity:0.5" width="16" height="16" viewBox="0 0 16 16"><rect x="1.5" y="4.5" width="10" height="10.5" fill="#eaf2fa" stroke="#9db4cc" stroke-width="0.9"/><path d="M14.5 1.5 L7 10.5 L6 13 L8.3 11.6 L15.5 2.5Z" fill="#c9c9c9" stroke="#999" stroke-width="0.5"/></svg>
<div class="t" style="left:56px;top:752.5px;color:#b6b6b6;letter-spacing:-0.159px">Collect True False Activity</div>
<svg style="left:32px;top:774px;opacity:0.5" width="16" height="16" viewBox="0 0 16 16"><rect x="2" y="2.5" width="12" height="13" rx="1" fill="#f0d9a8" stroke="#d0ac62" stroke-width="0.8"/><rect x="5.5" y="1" width="5" height="3" rx="1" fill="#bdbdbd"/><rect x="4" y="5" width="8" height="9" fill="#fdfdf4"/><path d="M5.5 7.5h5M5.5 9.7h5M5.5 11.9h5" stroke="#8fae8f" stroke-width="0.9"/></svg>
<div class="t" style="left:56px;top:775.5px;color:#b6b6b6;letter-spacing:-0.018px">Collect List Activity</div>
<svg style="left:32px;top:797px;opacity:0.5" width="16" height="17" viewBox="0 0 16 17"><rect x="1" y="3" width="14" height="11" rx="1.5" fill="#6b6250"/><rect x="3.5" y="5.5" width="9" height="6" fill="#efe6a8"/><path d="M2.5 2.2h11M2.5 14.8h11" stroke="#d9b23a" stroke-width="1.3" stroke-dasharray="1.4 1.3"/></svg>
<div class="t" style="left:56px;top:798.5px;color:#b6b6b6;letter-spacing:0.014px">Display a Webform Activity</div>
<svg style="left:32px;top:820px;opacity:0.5" width="16" height="16" viewBox="0 0 16 16"><rect x="4" y="2" width="8" height="12.5" rx="1" fill="#f4f8fc" stroke="#b7c7dd" stroke-width="0.9"/><path d="M6 5h4M6 7.5h4M6 10h4" stroke="#c9b57a" stroke-width="1"/></svg>
<div class="t" style="left:56px;top:821.5px;color:#b6b6b6;letter-spacing:-0.004px">Attach File Activity</div>
<svg style="left:32px;top:843px;opacity:0.5" width="16" height="16" viewBox="0 0 16 16"><rect x="6" y="0.8" width="9" height="4.2" fill="#2b2b2b"/><rect x="6" y="6" width="9" height="4.2" fill="#2b2b2b"/><rect x="6" y="11.2" width="9" height="4.2" fill="#2b2b2b"/><path d="M7.5 2.9h6M7.5 8.1h6M7.5 13.3h6" stroke="#fff" stroke-width="0.9"/><rect x="0.8" y="5.2" width="6.4" height="9.2" fill="#fff" stroke="#2b2b2b" stroke-width="1.1"/><path d="M2.2 7.6h3.6M2.2 9.8h3.6M2.2 12h3.6" stroke="#2b2b2b" stroke-width="1"/></svg>
<div class="t" style="left:56px;top:844.5px;color:#b6b6b6;letter-spacing:-0.124px">Database Data Collection</div>
<svg style="left:32px;top:866px;opacity:0.5" width="16" height="16" viewBox="0 0 16 16"><rect x="1.5" y="1.5" width="11.5" height="13.5" fill="#fff" stroke="#4f9a4f" stroke-width="1.1"/><path d="M3.5 5h5M3.5 8.3h5M3.5 11.6h5" stroke="#4f9a4f" stroke-width="1"/><path d="M9.5 4.5l1.3 1.5 3-3.6M9.5 7.8l1.3 1.5 3-3.6M9.5 11.1l1.3 1.5 3-3.6" stroke="#3d8a3d" stroke-width="1" fill="none"/></svg>
<div class="t" style="left:56px;top:867.5px;color:#b6b6b6;letter-spacing:-0.044px">Spreadsheet Collection Activity</div>
<svg style="left:32px;top:889px;opacity:0.5" width="16" height="16" viewBox="0 0 16 16"><rect x="0.8" y="3.5" width="14.6" height="9.5" rx="0.8" fill="#333"/><rect x="2.3" y="5" width="4.2" height="4.2" fill="#fff"/><rect x="8.3" y="5" width="5.6" height="2.2" fill="#fff"/><rect x="11.3" y="5" width="2.6" height="5.5" fill="#fff"/></svg>
<div class="t" style="left:56px;top:890.5px;color:#b6b6b6;letter-spacing:-0.012px">Specification Data Collection Activity</div>
<svg style="left:32px;top:912px;opacity:0.5" width="17" height="16" viewBox="0 0 17 16"><rect x="0" y="0.5" width="17" height="15" fill="#7b4fa3"/><path d="M4.5 5 L8 8 L4.5 11" stroke="#fff" stroke-width="1.3" fill="none"/><path d="M9 11.5h4" stroke="#fff" stroke-width="1.2"/></svg>
<div class="t" style="left:56px;top:913.5px;color:#b6b6b6;letter-spacing:-0.089px">Execute Command Activity</div>
<svg style="left:32px;top:937px;opacity:0.5" width="17" height="16" viewBox="0 0 17 16"><path d="M1 10.5 L9 7 L16 9.5 L8 13.5Z" fill="#d9b878"/><path d="M1 10.5 L8 13.5 V15.2 L1 12.2Z" fill="#b38f4f"/><path d="M8 13.5 L16 9.5 V11.2 L8 15.2Z" fill="#c49f5f"/><path d="M3.5 8 L9 5.5 L14 7.5 L8.5 10.3Z" fill="#ecd9a6"/><path d="M6.2 1 h3.2 v3.5 h2.3 L7.8 8.5 L3.9 4.5 h2.3Z" fill="#37c23f" stroke="#1f9428" stroke-width="0.5"/></svg>
<div class="t" style="left:56px;top:938.5px;color:#b6b6b6;letter-spacing:-0.065px">Load Carrier Activity</div>
<svg style="left:32px;top:960px;opacity:0.5" width="16" height="16" viewBox="0 0 16 16"><rect x="1" y="1" width="7" height="7" fill="#8fb8e8"/><rect x="8" y="1" width="7" height="7" fill="#f08878"/><rect x="1" y="8" width="7" height="7" fill="#f08878"/><rect x="8" y="8" width="7" height="7" fill="#5a68b8"/><rect x="1" y="1" width="14" height="14" fill="none" stroke="#d87060" stroke-width="0.6"/></svg>
<div class="t" style="left:56px;top:961.5px;color:#b6b6b6;letter-spacing:-0.055px">Sub-Assembly Activity</div>
<svg style="left:32px;top:983px;opacity:0.5" width="17" height="16" viewBox="0 0 17 16"><path d="M3.6 10.8 L13 3.6 L16 5.6 L6.6 13Z" fill="#8a8a8a"/><path d="M3.8 9.4 L13 2.4 L16.2 4.4 L13 3.6 L3.6 10.8Z" fill="#c4c4c4"/><path d="M0.8 12.4 L3.6 10.8 L6.6 13 L3.6 14.6Z" fill="#d9a850"/></svg>
<div class="t" style="left:56px;top:984.5px;color:#b6b6b6;letter-spacing:0.034px">Capture Unit Housing Activity</div>
<svg style="left:32px;top:1006px;opacity:0.5" width="17" height="16" viewBox="0 0 17 16"><path d="M3.6 10.8 L13 3.6 L16 5.6 L6.6 13Z" fill="#8a8a8a"/><path d="M3.8 9.4 L13 2.4 L16.2 4.4 L13 3.6 L3.6 10.8Z" fill="#c4c4c4"/><path d="M0.8 12.4 L3.6 10.8 L6.6 13 L3.6 14.6Z" fill="#d9a850"/></svg>
<div class="t" style="left:56px;top:1007.5px;color:#b6b6b6;letter-spacing:0.006px">Capture Unit Alias Activity</div>
<div class="a" style="left:17px;top:295px;width:324px;height:319px;border:3px solid #ea0f18;"></div>
<!--MENU_END-->
</body></html>
